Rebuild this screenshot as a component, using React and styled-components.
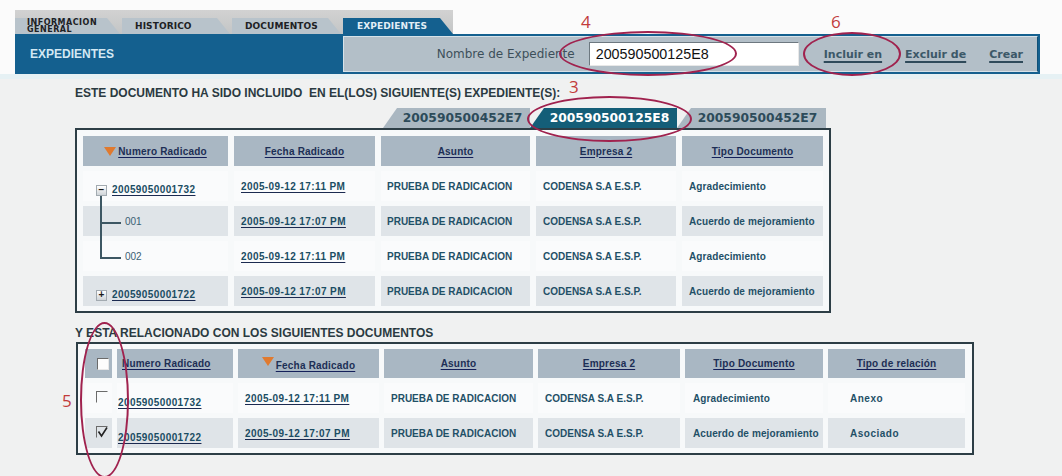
import React from 'react';
import styled, { createGlobalStyle } from 'styled-components';

const GlobalStyle = createGlobalStyle`
  html, body {
    margin: 0;
    padding: 0;
    background: #f0f1f1;
  }
`;

const Page = styled.div`
  position: relative;
  width: 1062px;
  height: 476px;
  overflow: hidden;
  background: #f0f1f1;
  font-family: "Liberation Sans", Arial, sans-serif;
`;

const TopArea = styled.div`
  background: #fbfbfb;
  padding-top: 10px;
  border-bottom: 5px solid #e6f1f4;
`;

const TabStrip = styled.div`
  margin-left: 15px;
  width: 438px;
  height: 24px;
  background: linear-gradient(#d2d2d2, #c3c5c6);
  display: flex;
  align-items: flex-end;
  gap: 2px;
`;

const MainTab = styled.div`
  width: ${(p) => p.$w}px;
  height: 16px;
  padding-left: ${(p) => p.$pl}px;
  box-sizing: border-box;
  display: flex;
  flex-direction: column;
  justify-content: center;
  clip-path: polygon(0 0, calc(100% - 13px) 0, 100% 100%, 0 100%);
  background: ${(p) => (p.$active ? '#14608f' : '#b8c3cb')};
  color: ${(p) => (p.$active ? '#e2eef6' : '#1d2124')};
  font-family: "DejaVu Sans", Verdana, sans-serif;
  font-weight: bold;
  font-size: ${(p) => (p.$small ? 8 : 9)}px;
  letter-spacing: ${(p) => (p.$small ? 0.5 : 0.1)}px;
  line-height: ${(p) => (p.$small ? 7 : 16)}px;
`;

const HeaderBar = styled.div`
  margin: 0 22px 0 15px;
  height: 40px;
  background: #14608f;
  display: flex;
`;

const BarTitle = styled.div`
  width: 313px;
  padding-left: 15px;
  display: flex;
  align-items: center;
  color: #d3e8f3;
  font-size: 12px;
  font-weight: bold;
`;

const SearchPanel = styled.div`
  flex: 1;
  margin: 2px 2px 2px 0;
  background: #b3bfc8;
  border: 1px solid #d6e2e9;
  border-right-color: #0f4f76;
  display: flex;
  align-items: center;
  justify-content: flex-end;
  padding-right: 14px;
`;

const FieldLabel = styled.span`
  font-family: "DejaVu Sans", Verdana, sans-serif;
  font-size: 12px;
  color: #3d4f5a;
  margin-right: 14px;
`;

const SearchInput = styled.div`
  width: 210px;
  height: 24px;
  box-sizing: border-box;
  background: #fff;
  border-top: 1px solid #6d7880;
  border-left: 1px solid #6d7880;
  border-right: 1px solid #e8e8e8;
  border-bottom: 1px solid #e8e8e8;
  padding-left: 6px;
  display: flex;
  align-items: center;
  font-size: 14.3px;
  color: #111;
  margin-right: 25px;
`;

const ActionLinks = styled.div`
  display: flex;
  gap: 23px;
`;

const ActionLink = styled.a`
  font-family: "DejaVu Sans", Verdana, sans-serif;
  font-weight: bold;
  font-size: 11px;
  color: #3c5868;
  text-decoration: underline;
  text-underline-offset: 3px;
  text-decoration-thickness: 2px;
  text-decoration-color: #2f4a5a;
`;

const Content = styled.div`
  padding-left: 75px;
`;

const SectionTitle = styled.div`
  margin-top: ${(p) => p.$mt}px;
  height: 14px;
  line-height: 14px;
  font-size: 12px;
  font-weight: bold;
  color: #2b3a41;
  white-space: pre;
`;

const SubTabs = styled.div`
  width: 756px;
  margin-top: 8px;
  padding-right: 5px;
  box-sizing: border-box;
  display: flex;
  justify-content: flex-end;
`;

const SubTab = styled.div`
  width: ${(p) => p.$w}px;
  height: 20px;
  padding-left: 12px;
  box-sizing: border-box;
  display: flex;
  align-items: center;
  justify-content: center;
  clip-path: polygon(14px 0, 100% 0, 100% 100%, 0 100%);
  background: ${(p) => (p.$active ? '#145e78' : '#aab7c1')};
  color: ${(p) => (p.$active ? '#ffffff' : '#2d4b5a')};
  font-family: "DejaVu Sans", Verdana, sans-serif;
  font-weight: bold;
  font-size: 12.3px;
`;

const TableBox = styled.div`
  width: ${(p) => p.$w}px;
  margin-left: ${(p) => p.$ml || 0}px;
  margin-top: ${(p) => p.$mt || 0}px;
  box-sizing: border-box;
  border: 2px solid #2d3e46;
  background: #f7f9fa;
  padding: ${(p) => p.$pad};
`;

const Grid = styled.table`
  width: 100%;
  table-layout: fixed;
  border-collapse: separate;
  border-spacing: ${(p) => p.$sx}px 5px;
  font-size: 10px;
  font-weight: bold;
  color: #1f5067;
`;

const Col = styled.col`
  width: ${(p) => p.$w}px;
`;

const HeadRow = styled.tr`
  height: ${(p) => p.$h}px;
`;

const Th = styled.th`
  padding: 0 0 0 ${(p) => p.$pl || 0}px;
  background: #a9b7c3;
  text-align: ${(p) => p.$align || 'center'};
  vertical-align: middle;
  white-space: nowrap;
`;

const HeadLink = styled.a`
  color: #1d2f55;
  letter-spacing: 0.2px;
  text-decoration: underline;
  text-underline-offset: 2px;
  text-decoration-color: #14205a;
`;

const SortArrow = styled.span`
  display: inline-block;
  width: 0;
  height: 0;
  border-left: 6px solid transparent;
  border-right: 6px solid transparent;
  border-top: 9px solid #e07a2f;
  margin-right: 2px;
  vertical-align: ${(p) => (p.$raised ? '3px' : '-1px')};
`;

const Row = styled.tr`
  height: 30px;
`;

const Td = styled.td`
  position: relative;
  padding: ${(p) => (p.$low ? 8 : 0)}px 0 0 ${(p) => p.$pl ?? 7}px;
  background: ${(p) => (p.$shade ? '#dfe4e8' : '#fafbfc')};
  vertical-align: middle;
  white-space: nowrap;
  font-weight: ${(p) => (p.$light ? 'normal' : 'bold')};
  color: ${(p) => (p.$light ? '#3a6173' : '#1f5067')};
  letter-spacing: ${(p) => p.$ls || 0}px;

  ${(p) =>
    p.$branch &&
    `
    &::before {
      content: '';
      position: absolute;
      left: 17px;
      top: ${p.$branch === 'mid' ? -10 : -5}px;
      width: 2px;
      ${p.$branch === 'mid' ? 'bottom: -5px;' : 'height: calc(50% + 7px);'}
      background: #3d5763;
    }
    &::after {
      content: '';
      position: absolute;
      left: 17px;
      top: calc(50% + 1px);
      width: 21px;
      height: 2px;
      background: #3d5763;
    }
  `}
`;

const CellLink = styled.a`
  color: #1b4d63;
  letter-spacing: 0.4px;
  text-decoration: underline;
  text-underline-offset: 2px;
  text-decoration-color: #1b2a50;
`;

const ToggleBox = styled.span`
  display: inline-flex;
  align-items: center;
  justify-content: center;
  width: 11px;
  height: 11px;
  margin-right: 5px;
  vertical-align: middle;
  box-sizing: border-box;
  border: 1px solid #a2aab0;
  background: linear-gradient(#ffffff, #cfd4d8);
  color: #1a1a1a;
  font-size: 10px;
  line-height: 1;
`;

const Check = styled.span`
  display: inline-block;
  width: 12px;
  height: 12px;
  box-sizing: border-box;
  border-top: 1px solid #6b6b6b;
  border-left: 1px solid #6b6b6b;
  border-right: 1px solid ${(p) => (p.$head ? '#e8e8e8' : 'transparent')};
  border-bottom: 1px solid ${(p) => (p.$head ? '#e8e8e8' : 'transparent')};
  background: ${(p) => (p.$head ? '#fdfdfd' : 'transparent')};
  vertical-align: middle;
  position: relative;
  top: ${(p) => (p.$head ? 0 : -1)}px;

  svg {
    display: block;
  }
`;

const Ellipse = styled.div`
  position: absolute;
  left: ${(p) => p.$x}px;
  top: ${(p) => p.$y}px;
  width: ${(p) => p.$w}px;
  height: ${(p) => p.$h}px;
  box-sizing: border-box;
  border: 2px solid #a0224e;
  border-radius: 50%;
  pointer-events: none;
`;

const Marker = styled.span`
  position: absolute;
  left: ${(p) => p.$x}px;
  top: ${(p) => p.$y}px;
  font-family: "Open Sans", sans-serif;
  font-size: 17px;
  line-height: 1;
  color: #c23b3b;
`;

const expedienteRows = [
  { kind: 'parent', icon: '\u2212', num: '20059050001732', date: '2005-09-12 17:11 PM', tipo: 'Agradecimiento' },
  { kind: 'mid', num: '001', date: '2005-09-12 17:07 PM', tipo: 'Acuerdo de mejoramiento' },
  { kind: 'last', num: '002', date: '2005-09-12 17:11 PM', tipo: 'Agradecimiento' },
  { kind: 'parent', icon: '+', num: '20059050001722', date: '2005-09-12 17:07 PM', tipo: 'Acuerdo de mejoramiento' },
];

const relatedRows = [
  { checked: false, num: '20059050001732', date: '2005-09-12 17:11 PM', tipo: 'Agradecimiento', rel: 'Anexo' },
  { checked: true, num: '20059050001722', date: '2005-09-12 17:07 PM', tipo: 'Acuerdo de mejoramiento', rel: 'Asociado' },
];

const CheckMark = () => (
  <svg width="11" height="11" viewBox="0 0 11 11">
    <path d="M1.5 4.5 L4.5 9 L10 0.5" fill="none" stroke="#222" strokeWidth="1.6" />
  </svg>
);

const ExpedienteTable = () => (
  <TableBox $w={756} $pad="1px 0 0 0">
    <Grid $sx={6}>
      <colgroup>
        <Col $w={145} />
        <Col $w={141} />
        <Col $w={149} />
        <Col $w={140} />
        <Col $w={141} />
      </colgroup>
      <thead>
        <HeadRow $h={30}>
          <Th>
            <SortArrow />
            <HeadLink>Numero Radicado</HeadLink>
          </Th>
          <Th><HeadLink>Fecha Radicado</HeadLink></Th>
          <Th><HeadLink>Asunto</HeadLink></Th>
          <Th><HeadLink>Empresa 2</HeadLink></Th>
          <Th><HeadLink>Tipo Documento</HeadLink></Th>
        </HeadRow>
      </thead>
      <tbody>
        {expedienteRows.map((r, i) => {
          const shade = i % 2 === 1;
          return (
            <Row key={i}>
              {r.kind === 'parent' ? (
                <Td $shade={shade} $pl={13} $low>
                  <ToggleBox>{r.icon}</ToggleBox>
                  <CellLink>{r.num}</CellLink>
                </Td>
              ) : (
                <Td $shade={shade} $pl={42} $light $branch={r.kind}>
                  {r.num}
                </Td>
              )}
              <Td $shade={shade}><CellLink>{r.date}</CellLink></Td>
              <Td $shade={shade} $pl={6}>PRUEBA DE RADICACION</Td>
              <Td $shade={shade}>CODENSA S.A E.S.P.</Td>
              <Td $shade={shade} $ls={0.1}>{r.tipo}</Td>
            </Row>
          );
        })}
      </tbody>
    </Grid>
  </TableBox>
);

const RelatedTable = () => (
  <TableBox $w={898} $ml={1} $mt={2} $pad="0 2px">
    <Grid $sx={5}>
      <colgroup>
        <Col $w={27} />
        <Col $w={116} />
        <Col $w={141} />
        <Col $w={149} />
        <Col $w={142} />
        <Col $w={138} />
        <Col $w={137} />
      </colgroup>
      <thead>
        <HeadRow $h={29}>
          <Th $align="left" $pl={12}><Check $head /></Th>
          <Th $align="left" $pl={5}><HeadLink>Numero Radicado</HeadLink></Th>
          <Th>
            <SortArrow $raised />
            <HeadLink>Fecha Radicado</HeadLink>
          </Th>
          <Th><HeadLink>Asunto</HeadLink></Th>
          <Th><HeadLink>Empresa 2</HeadLink></Th>
          <Th><HeadLink>Tipo Documento</HeadLink></Th>
          <Th><HeadLink>Tipo de relación</HeadLink></Th>
        </HeadRow>
      </thead>
      <tbody>
        {relatedRows.map((r, i) => {
          const shade = i % 2 === 1;
          return (
            <Row key={i}>
              <Td $shade={shade} $pl={11}>
                <Check>{r.checked && <CheckMark />}</Check>
              </Td>
              <Td $shade={shade} $pl={1} $low><CellLink>{r.num}</CellLink></Td>
              <Td $shade={shade}><CellLink>{r.date}</CellLink></Td>
              <Td $shade={shade}>PRUEBA DE RADICACION</Td>
              <Td $shade={shade}>CODENSA S.A E.S.P.</Td>
              <Td $shade={shade} $pl={8} $ls={0.1}>{r.tipo}</Td>
              <Td $shade={shade} $pl={22} $ls={0.5}>{r.rel}</Td>
            </Row>
          );
        })}
      </tbody>
    </Grid>
  </TableBox>
);

export default function App() {
  return (
    <Page>
      <GlobalStyle />
      <TopArea>
        <TabStrip>
          <MainTab $w={105} $pl={12} $small>
            <span>INFORMACION</span>
            <span>GENERAL</span>
          </MainTab>
          <MainTab $w={108} $pl={13}>HISTORICO</MainTab>
          <MainTab $w={109} $pl={13}>DOCUMENTOS</MainTab>
          <MainTab $w={110} $pl={14} $active>EXPEDIENTES</MainTab>
        </TabStrip>
        <HeaderBar>
          <BarTitle>EXPEDIENTES</BarTitle>
          <SearchPanel>
            <FieldLabel>Nombre de Expediente</FieldLabel>
            <SearchInput>200590500125E8</SearchInput>
            <ActionLinks>
              <ActionLink>Incluir en</ActionLink>
              <ActionLink>Excluir de</ActionLink>
              <ActionLink>Crear</ActionLink>
            </ActionLinks>
          </SearchPanel>
        </HeaderBar>
      </TopArea>

      <Content>
        <SectionTitle $mt={7}>ESTE DOCUMENTO HA SIDO INCLUIDO  EN EL(LOS) SIGUIENTE(S) EXPEDIENTE(S):</SectionTitle>
        <SubTabs>
          <SubTab $w={147}>200590500452E7</SubTab>
          <SubTab $w={147} $active>200590500125E8</SubTab>
          <SubTab $w={149}>200590500452E7</SubTab>
        </SubTabs>
        <ExpedienteTable />
        <SectionTitle $mt={13}>Y ESTA RELACIONADO CON LOS SIGUIENTES DOCUMENTOS</SectionTitle>
        <RelatedTable />
      </Content>

      <Ellipse $x={559} $y={31} $w={178} $h={45} />
      <Ellipse $x={803} $y={32} $w={98} $h={44} />
      <Ellipse $x={527} $y={96} $w={165} $h={46} />
      <Ellipse $x={80} $y={322} $w={49} $h={156} />
      <Marker $x={581} $y={13}>4</Marker>
      <Marker $x={831} $y={13}>6</Marker>
      <Marker $x={569} $y={78}>3</Marker>
      <Marker $x={62} $y={392}>5</Marker>
    </Page>
  );
}
